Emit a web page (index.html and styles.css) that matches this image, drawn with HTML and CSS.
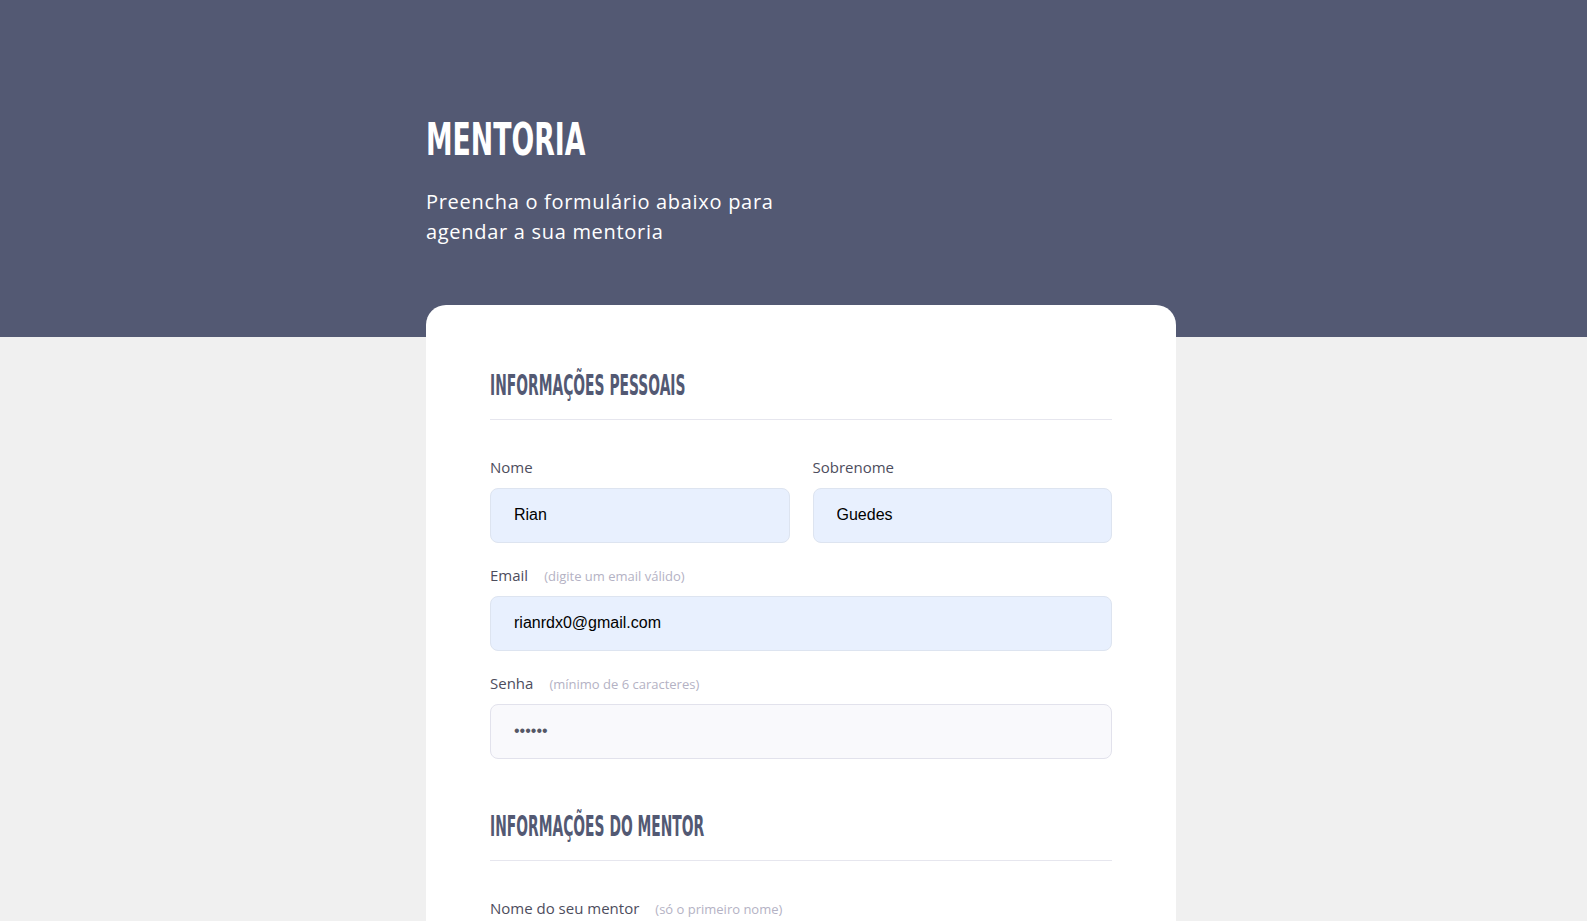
FILE: index.html
```html
<!DOCTYPE html>
<html lang="pt-BR">
<head>
<meta charset="utf-8">
<title>Mentoria</title>
<link rel="stylesheet" href="styles.css">
</head>
<body>
<header class="hero">
  <div class="wrap">
    <h1 class="hero-title"><span class="squeeze">MENTORIA</span></h1>
    <p class="hero-sub">Preencha o formulário abaixo para agendar a sua mentoria</p>
  </div>
</header>
<main class="wrap">
  <form class="card">
    <section class="section">
      <h2 class="section-title"><span class="squeeze">Informações pessoais</span></h2>
      <div class="row">
        <div class="field">
          <label class="label">Nome</label>
          <input class="input filled" type="text" value="Rian">
        </div>
        <div class="field">
          <label class="label">Sobrenome</label>
          <input class="input filled" type="text" value="Guedes">
        </div>
      </div>
      <div class="field">
        <label class="label">Email <span class="hint">(digite um email válido)</span></label>
        <input class="input filled" type="email" value="rianrdx0@gmail.com">
      </div>
      <div class="field">
        <label class="label">Senha <span class="hint">(mínimo de 6 caracteres)</span></label>
        <input class="input secret" type="password" value="123456">
      </div>
    </section>
    <section class="section">
      <h2 class="section-title"><span class="squeeze">Informações do mentor</span></h2>
      <div class="field">
        <label class="label">Nome do seu mentor <span class="hint">(só o primeiro nome)</span></label>
        <input class="input" type="text">
      </div>
    </section>
  </form>
</main>
</body>
</html>
```
FILE: styles.css
```css
* { box-sizing: border-box; }
html, body { margin: 0; padding: 0; }
body {
  background: #f0f0f0;
  font-family: "Open Sans", "Liberation Sans", sans-serif;
  overflow: hidden;
}
.wrap {
  width: 765px;
  margin: 0 auto;
  padding-left: 15px;
}
.hero {
  background: #535973;
  padding: 115px 0 90px;
}
.hero-title {
  margin: 0;
  font-family: "DejaVu Sans Condensed", "Liberation Sans", sans-serif;
  font-weight: 700;
  font-size: 45px;
  line-height: 49.5px;
  color: #ffffff;
  white-space: nowrap;
}
.squeeze {
  display: inline-block;
  transform-origin: left center;
}
.hero-title .squeeze { transform: scaleX(0.66); }
.hero-sub {
  margin: 22px 0 0;
  max-width: 400px;
  font-size: 20px;
  line-height: 30px;
  letter-spacing: 0.7px;
  color: #ffffff;
}
.card {
  position: relative;
  margin-top: -32px;
  background: #ffffff;
  border-radius: 20px 20px 0 0;
  padding: 64px 64px 64px;
  min-height: 700px;
}
.section + .section { margin-top: 51px; }
.section-title {
  margin: 0 0 36px;
  padding-bottom: 16px;
  border-bottom: 1px solid #e6e6ee;
  font-family: "DejaVu Sans Condensed", "Liberation Sans", sans-serif;
  font-weight: 700;
  font-size: 28px;
  line-height: 34px;
  text-transform: uppercase;
  color: #535973;
  white-space: nowrap;
}
.section-title .squeeze { transform: scaleX(0.55); }
.row {
  display: grid;
  grid-template-columns: 1fr 1fr;
  gap: 23px;
}
.field { margin-bottom: 21px; }
.label {
  display: flex;
  align-items: baseline;
  gap: 16px;
  height: 22px;
  margin-bottom: 10px;
  font-size: 15px;
  line-height: 22px;
  color: #4d4d5d;
}
.hint {
  font-size: 13px;
  line-height: 22px;
  color: #b4b2c4;
}
.input {
  display: block;
  width: 100%;
  height: 55px;
  padding: 0 23px;
  border: 1px solid #e2e2ec;
  border-radius: 8px;
  background: #f9f9fc;
  font-family: "Liberation Sans", Arial, sans-serif;
  font-size: 16px;
  color: #000000;
  outline: none;
}
.input.filled {
  background: #e8f0fe;
  border-color: #dde4f0;
}
.input.secret { color: #555766; }
```
